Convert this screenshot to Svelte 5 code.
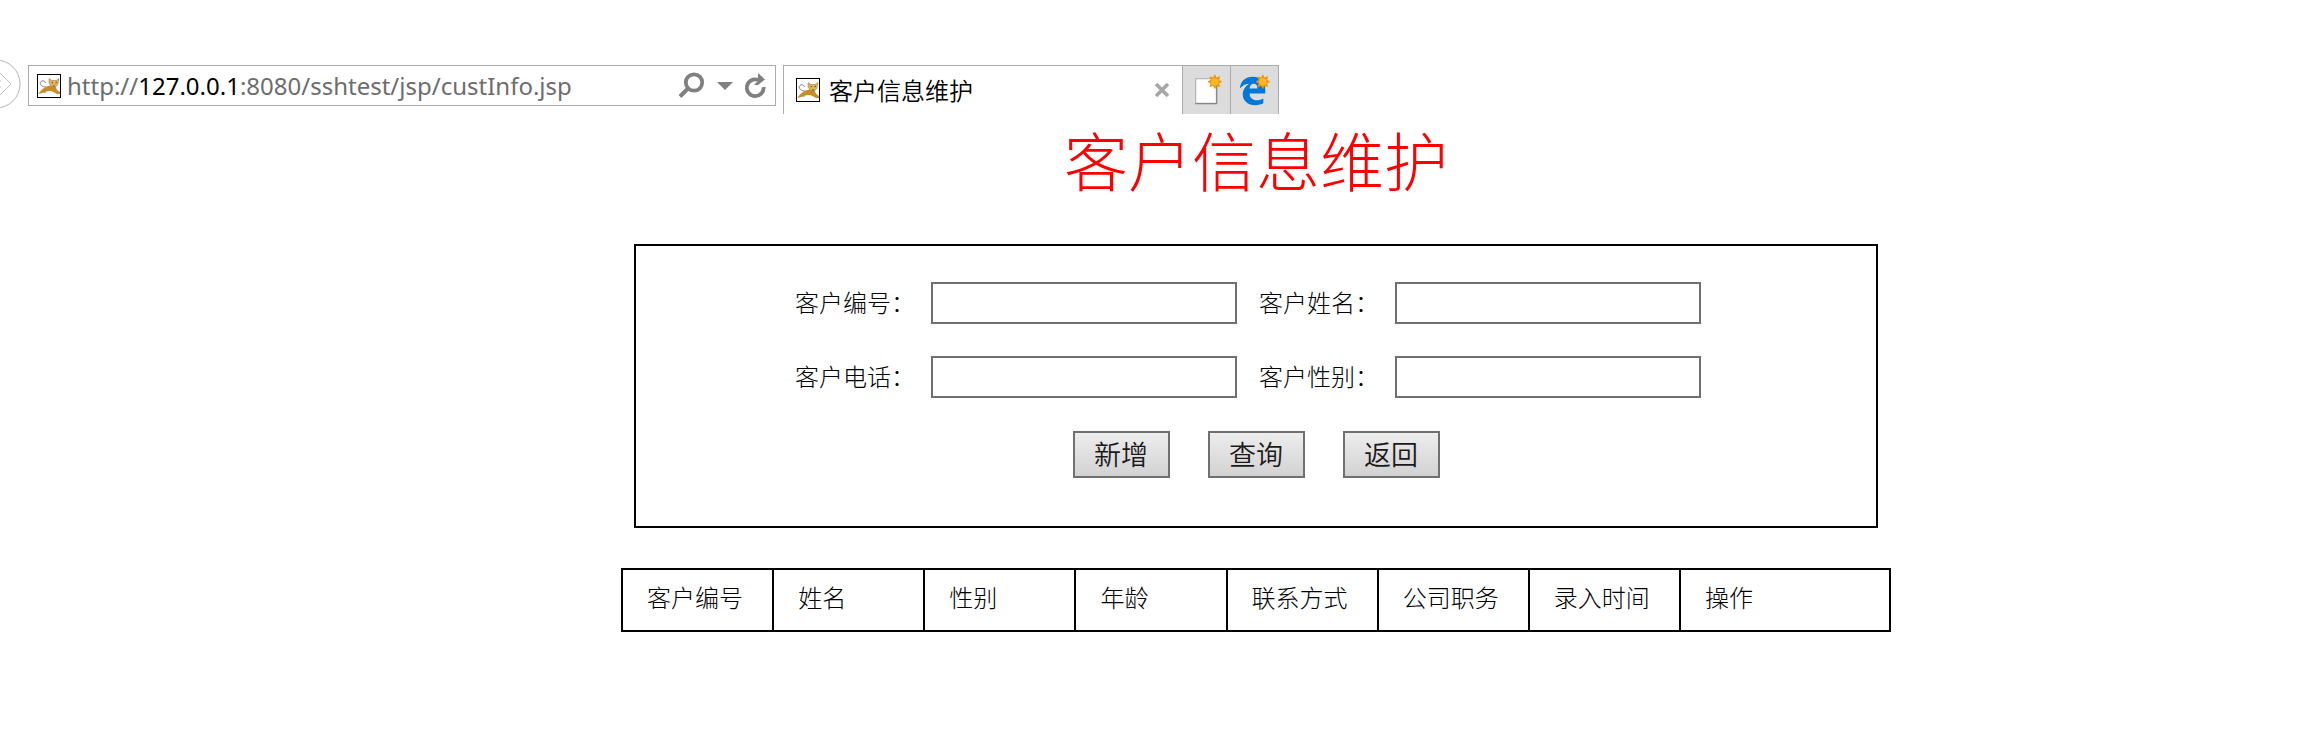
<script lang="ts">
  const fields = [
    { id: "custNo", label: "客户编号" },
    { id: "custName", label: "客户姓名" },
    { id: "custPhone", label: "客户电话" },
    { id: "custSex", label: "客户性别" },
  ];

  const actions = ["新增", "查询", "返回"];

  const columns = [
    "客户编号",
    "姓名",
    "性别",
    "年龄",
    "联系方式",
    "公司职务",
    "录入时间",
    "操作",
  ];

  let values: Record<string, string> = $state({
    custNo: "",
    custName: "",
    custPhone: "",
    custSex: "",
  });
</script>

{#snippet cat()}
  <svg class="favicon" viewBox="0 0 24 24" aria-hidden="true">
    <rect x=".5" y=".5" width="23" height="23" fill="#fff" stroke="#000" />
    <path d="M9 13 C4 13 2 9 4 7.5 C6 6 8 7 8.5 9 M8 14 L6 18 L9 18" fill="none" stroke="#666" stroke-width=".8" />
    <path d="M1.5 20 C4 15 9 12.5 13 11.5 L19 13 C19 15 21 17 23 18 V20 H20 C17 18 15 16.5 12 17 C8 17.5 6 19 1.5 20Z" fill="#c98d27" />
    <path d="M12 4.5 L15 6.5 H19 L22 4.5 L21 10 L18 14 L14 12 L12 9Z" fill="#e2b45a" stroke="#8a7448" stroke-width=".5" />
    <path d="M14.5 8 L16 9 M20 8 L18.5 9 M16 12 H18" stroke="#333" stroke-width=".8" />
  </svg>
{/snippet}

{#snippet spark()}
  <g transform="translate(32.5 15)">
    <path d="M0 -7 L1.5 -3.8 L5 -5 L3.8 -1.5 L7 0 L3.8 1.5 L5 5 L1.5 3.8 L0 7 L-1.5 3.8 L-5 5 L-3.8 1.5 L-7 0 L-3.8 -1.5 L-5 -5 L-1.5 -3.8Z" fill="#ee9310" stroke="#ee9310" stroke-width=".8" />
    <circle r="3.8" fill="#ffb71e" />
  </g>
{/snippet}

<header class="chrome">
  <button class="forward" aria-label="前进">
    <svg viewBox="0 0 50 50">
      <circle cx="25" cy="25" r="24" fill="none" stroke="#b4b4b4" />
      <path d="M28 13 L40 25 L28 37 M19 22 H30 M19 28 H30" fill="none" stroke="#c0c0c0" />
    </svg>
  </button>

  <div class="address">
    {@render cat()}
    <a class="url" href="http://127.0.0.1:8080/sshtest/jsp/custInfo.jsp">http://<b>127.0.0.1</b>:8080/sshtest/jsp/custInfo.jsp</a>
    <button class="tool" aria-label="搜索">
      <svg width="27" height="27" viewBox="0 0 27 27">
        <circle cx="16" cy="10.5" r="8.2" fill="none" stroke="#808080" stroke-width="3.8" />
        <path d="M10 16.5 L2 24.5" stroke="#808080" stroke-width="4" />
      </svg>
    </button>
    <button class="tool" aria-label="下拉">
      <svg width="16" height="8" viewBox="0 0 16 8"><path d="M0 0 H16 L8 8Z" fill="#808080" /></svg>
    </button>
    <button class="tool" aria-label="刷新">
      <svg width="22" height="26" viewBox="0 0 22 26">
        <path d="M13.5 7 A8.4 8.4 0 1 0 18.6 14" fill="none" stroke="#808080" stroke-width="3.8" />
        <path d="M13 0 L20 6.5 L13 12 H9 L13 8Z" fill="#808080" />
      </svg>
    </button>
  </div>

  <div class="tab">
    {@render cat()}
    <span class="tab-title">客户信息维护</span>
    <button class="close" aria-label="关闭">
      <svg width="16" height="16" viewBox="0 0 16 16"><path d="M2 2 L14 14 M14 2 L2 14" stroke="#a6a6a6" stroke-width="3.6" /></svg>
    </button>
  </div>
  <button class="new-tab" aria-label="新建标签页">
    <svg viewBox="0 0 48 48">
      <rect x="13" y="12" width="21" height="25" fill="#fff" stroke="#a8a8a8" />
      <path d="M12.5 37.5 H34.5 V18" fill="none" stroke="#777" />
      {@render spark()}
    </svg>
  </button>
  <button class="new-tab" aria-label="Microsoft Edge">
    <svg viewBox="0 0 48 48">
      <path d="M9 22 C10 14 15 10 22 10 C31 10 35 16 35 23 V27 H19 C19 32 23 34 27 34 C30 34 32 33 33 32 V37 C31 38 28 39 25 39 C17 39 12 34 12 28 C12 23 15 19 19 17 C15 17 11 19 9 22Z" fill="#0078d7" />
      <path d="M19 22 H27 C27 19 26 17 23 17 C21 17 19 19 19 22Z" fill="#dcdcdc" />
      {@render spark()}
    </svg>
  </button>
</header>

<main>
  <h1>客户信息维护</h1>

  <form class="panel" onsubmit={(e) => e.preventDefault()}>
    <div class="fields">
      {#each fields as field}
        <label for={field.id}>{field.label}：</label>
        <input id={field.id} type="text" bind:value={values[field.id]} />
      {/each}
    </div>
    <div class="actions">
      {#each actions as action}
        <button type="button">{action}</button>
      {/each}
    </div>
  </form>

  <table>
    <thead>
      <tr>
        {#each columns as column}
          <th scope="col">{column}</th>
        {/each}
      </tr>
    </thead>
  </table>
</main>

<style>
  :global(body) {
    margin: 0;
    background: #fff;
    overflow-x: hidden;
  }

  button {
    padding: 0;
    border: 0;
    background: none;
  }

  svg {
    display: block;
    flex: none;
  }

  /* browser bar */
  .chrome {
    display: flex;
    align-items: flex-start;
    padding-top: 65px;
    font-family: "Noto Sans", "Noto Sans CJK SC", sans-serif;
    font-size: 24px;
  }

  .forward {
    width: 50px;
    height: 50px;
    margin: -6px 7px 0 -29px;
  }

  .favicon {
    width: 24px;
    height: 24px;
  }

  .address {
    box-sizing: border-box;
    display: flex;
    align-items: center;
    width: 748px;
    height: 41px;
    padding: 0 8px;
    border: 1px solid #ababab;
  }

  .url {
    flex: 1;
    margin-left: 6px;
    color: #6d6d6d;
    line-height: 36px;
    text-decoration: none;
    white-space: nowrap;
  }

  .url b {
    color: #000;
    font-weight: 400;
  }

  .tool {
    margin-left: 12px;
  }

  .tab {
    box-sizing: border-box;
    display: flex;
    align-items: center;
    width: 399px;
    height: 49px;
    margin-left: 7px;
    padding: 0 12px;
    border: 1px solid #ababab;
    border-width: 1px 0 0 1px;
  }

  .tab-title {
    flex: 1;
    margin-left: 9px;
    font-family: "Noto Sans CJK SC", sans-serif;
    font-weight: 350;
    line-height: 36px;
  }

  .new-tab {
    box-sizing: border-box;
    width: 48px;
    height: 49px;
    border: 1px solid #ababab;
    border-width: 1px 0 0 1px;
    background: #dcdcdc;
  }

  .new-tab:last-child {
    width: 49px;
    border-right-width: 1px;
  }

  /* page */
  main {
    width: 60%;
    max-width: 1270px;
    margin: 0 auto;
    padding-left: 197px;
    font-family: "Noto Sans CJK SC", sans-serif;
    font-size: 24px;
    font-weight: 300;
  }

  h1 {
    margin: 0;
    padding: 4px 0 46px;
    color: #f00;
    font-size: 64px;
    font-weight: 300;
    line-height: 80px;
    text-align: center;
  }

  .panel {
    box-sizing: border-box;
    margin: 0 13px 40px;
    padding: 36px 0 48px;
    border: 2px solid #000;
  }

  .fields {
    display: grid;
    grid-template-columns: auto 306px auto 306px;
    justify-content: center;
    align-items: center;
    row-gap: 32px;
    padding-right: 16px;
  }

  label {
    margin-right: 16px;
    padding-bottom: 2px;
    line-height: 36px;
  }

  label:nth-of-type(even) {
    margin-left: 22px;
  }

  input {
    box-sizing: border-box;
    width: 100%;
    height: 42px;
    padding: 2px 8px;
    border: 2px solid #707070;
    font: inherit;
  }

  .actions {
    display: flex;
    justify-content: center;
    gap: 38px;
    margin-top: 33px;
  }

  .actions button {
    width: 97px;
    height: 47px;
    padding-bottom: 2px;
    border: 2px solid #707070;
    background: linear-gradient(#ededed, #d2d2d2);
    color: #1a1a1a;
    font-family: "Noto Sans CJK SC", sans-serif;
    font-size: 27px;
    font-weight: 350;
    line-height: 36px;
  }

  table {
    width: 100%;
    border-collapse: collapse;
    table-layout: fixed;
  }

  th {
    box-sizing: border-box;
    height: 62px;
    padding: 0 0 6px 24px;
    border: 2px solid #000;
    font-weight: 300;
    line-height: 36px;
    text-align: left;
  }

  th:last-child {
    width: 210px;
  }
</style>
